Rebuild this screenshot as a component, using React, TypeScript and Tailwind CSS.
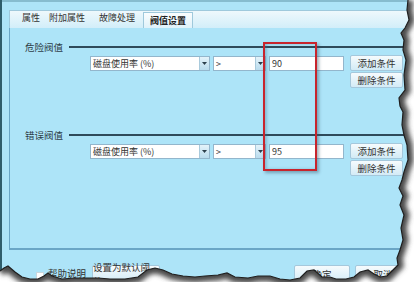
import React from "react";

const EDGE =
  "408,0 407,10 409,20 405,28 401,33 404,40 403,50 406,60 404,75 405,90 399,98 400,106 403,112 402,125 404,135 407,145 408,160 404,172 402,180 399,188 403,196 400,205 404,215 401,228 403,240 400,250 397,258 398,265 393,270 387,276 380,277 374,274 368,270 360,272 354,277 346,279 336,279 330,277 322,277 314,270 307,271 300,278 290,280 280,279 270,276 258,276 248,278 235,277 227,273 218,275 205,276 195,277 183,276 172,274 163,270 155,268 147,270 138,277 125,279 110,279 98,278 88,278 75,278 62,279 52,276 48,273 44,276 38,279 30,279 22,277 15,272 8,266 4,268 0,271";

function Combo({ text, width }: { text: string; width: string }) {
  return (
    <div className={`${width} h-[15px] flex bg-white border border-[#93b6cc]`}>
      <span className="flex-1 pl-[2px] text-[9px] leading-[13px] text-[#333]">{text}</span>
      <span className="w-[10px] flex items-center justify-center bg-gradient-to-b from-[#e4f3fa] to-[#b9dcee] border-l border-[#a9cadc]">
        <svg width="5" height="3" viewBox="0 0 5 3">
          <path d="M0 0h5L2.5 3z" fill="#2b3f4c" />
        </svg>
      </span>
    </div>
  );
}

function Btn({ label, className = "" }: { label: string; className?: string }) {
  return (
    <div
      className={`h-[16px] flex items-center justify-center rounded-[2px] border border-[#a5c8dc] bg-gradient-to-b from-[#f6fbfd] to-[#d3ebf6] text-[9.5px] text-[#333] ${className}`}
    >
      {label}
    </div>
  );
}

function Group({ title, value }: { title: string; value: string }) {
  return (
    <>
      <div className="h-[10px] flex items-center">
        <span className="ml-[15px] text-[9.5px] leading-[10px] text-[#2d3d47]">{title}</span>
        <div className="flex-1 ml-[6px] h-[2px] bg-[#2e4a5a]" />
      </div>
      <div className="flex mt-[3px] ml-[80px]">
        <div className="flex gap-[3px] mt-[1px]">
          <Combo text="磁盘使用率 (%)" width="w-[120px]" />
          <Combo text=">" width="w-[53px]" />
          <div className="w-[75px] h-[15px] bg-white border border-[#93b6cc] pl-[2px] text-[9px] leading-[13px] text-[#333]">
            {value}
          </div>
        </div>
        <div className="flex flex-col gap-[1px] ml-[6px]">
          <Btn label="添加条件" className="w-[53px]" />
          <Btn label="删除条件" className="w-[53px]" />
        </div>
      </div>
    </>
  );
}

export default function App() {
  return (
    <div className="relative w-[414px] h-[282px] overflow-hidden bg-[#ade4f8] font-['Noto_Sans_CJK_SC','Liberation_Sans',sans-serif]">
      <div className="h-[282px] border-l-2 border-[#2f5d6b]">
        <div className="h-[2px] bg-[#86bccf]" />
        <div className="pt-[8px] pl-[7px]">
          {/* Tab strip */}
          <div className="h-[18px] flex items-end border-t border-l border-[#9fc9dc] bg-gradient-to-b from-[#eef8fc] to-[#d2eef9] text-[9px] text-[#333]">
            <span className="ml-[12px] mb-[4px]">属性</span>
            <span className="ml-[9px] mb-[4px]">附加属性</span>
            <span className="ml-[14px] mb-[4px]">故障处理</span>
            <span className="ml-[8px] w-[50px] h-[16px] flex items-center justify-center border border-b-0 border-[#9fc9dc] bg-gradient-to-b from-[#fafdfe] to-[#dff2fa] font-bold text-[#222]">
              阀值设置
            </span>
          </div>
          {/* Panel */}
          <div className="h-[222px] pt-[14px] border-l border-b-2 border-[#6aa6c6]">
            <Group title="危险阀值" value="90" />
            <div className="h-[42px]" />
            <Group title="错误阀值" value="95" />
          </div>
          {/* Footer */}
          <div className="flex items-start mt-[15px]">
            <span className="ml-[27px] mt-[7px] w-[8px] h-[8px] bg-white border border-[#c9d7de]" />
            <span className="ml-[4px] mt-[1px] text-[9.5px] text-[#333]">帮助说明</span>
            <Btn label="设置为默认阈值" className="ml-[6px] w-[68px] h-[18px]" />
            <Btn label="确定" className="ml-[134px] w-[56px] h-[18px]" />
            <Btn label="取消" className="ml-[5px] w-[56px] h-[18px]" />
          </div>
        </div>
      </div>

      {/* Red highlight */}
      <div className="absolute left-[263px] top-[42px] w-[54px] h-[129px] border-2 border-[#c8242c] shadow-[2px_2px_3px_rgba(50,80,100,0.45),inset_2px_0_3px_rgba(60,110,140,0.35)]" />

      {/* Torn paper edge */}
      <svg className="absolute inset-0" width="414" height="282" viewBox="0 0 414 282">
        <defs>
          <clipPath id="outside">
            <polygon points={`${EDGE} 0,282 414,282 414,0`} />
          </clipPath>
          <filter id="blur" x="-10%" y="-10%" width="120%" height="120%">
            <feGaussianBlur stdDeviation="2.5" />
          </filter>
        </defs>
        <polygon points={`${EDGE} 0,282 414,282 414,0`} fill="#ffffff" />
        <g clipPath="url(#outside)">
          <polyline points={EDGE} fill="none" stroke="#4a4a4a" strokeWidth="11" filter="url(#blur)" />
        </g>
        <polyline points={EDGE} fill="none" stroke="#1e1e1e" strokeWidth="1.2" />
      </svg>
    </div>
  );
}
